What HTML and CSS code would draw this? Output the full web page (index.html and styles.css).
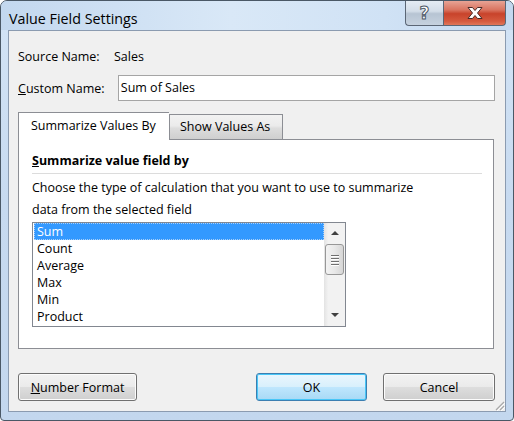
FILE: index.html
```html
<!DOCTYPE html>
<html>
<head>
<meta charset="utf-8">
<link rel="stylesheet" href="styles.css">
</head>
<body>
<div class="window">
  <div class="titlebar">
    <span class="title">Value Field Settings</span>
    <div class="caption-btns">
      <div class="cbtn help"><span class="qmark">?</span></div>
      <div class="cbtn close">
        <svg width="20" height="14" viewBox="0 0 20 14">
          <path d="M3 1.5 H7.5 L10 4.5 L12.5 1.5 H17 L12.5 7 L17 12.5 H12.5 L10 9.5 L7.5 12.5 H3 L7.5 7 Z" fill="#ffffff" stroke="#4a2a26" stroke-width="1" stroke-linejoin="round"/>
        </svg>
      </div>
    </div>
  </div>
  <div class="client">
    <div class="row source">
      <span class="label">Source Name:</span>
      <span class="value">Sales</span>
    </div>
    <div class="row custom">
      <span class="label label-wide"><u>C</u>ustom Name:</span>
      <div class="input">Sum of Sales</div>
    </div>
    <div class="tabs">
      <div class="tab active">Summarize Values By</div>
      <div class="tab">Show Values As</div>
    </div>
    <div class="panel">
      <div class="group-title"><u>S</u>ummarize value field by</div>
      <div class="sep"></div>
      <p class="desc">Choose the type of calculation that you want to use to summarize<br>data from the selected field</p>
      <div class="listbox">
        <ul class="items">
          <li class="sel">Sum</li>
          <li>Count</li>
          <li>Average</li>
          <li>Max</li>
          <li>Min</li>
          <li>Product</li>
        </ul>
        <div class="scrollbar">
          <div class="arrow up"></div>
          <div class="thumb"><span></span><span></span><span></span><span></span></div>
          <div class="track"></div>
          <div class="arrow down"></div>
        </div>
      </div>
    </div>
    <div class="buttons">
      <div class="btn numfmt"><u>N</u>umber Format</div>
      <div class="spacer"></div>
      <div class="btn ok">OK</div>
      <div class="btn cancel">Cancel</div>
    </div>
    <svg class="grip" width="11" height="11" viewBox="0 0 11 11">
      <path d="M10 2 L2 10 M10 6 L6 10" stroke="#a9a9a9" stroke-width="1.2"/>
      <path d="M11 3 L3 11 M11 7 L7 11" stroke="#ffffff" stroke-width="1"/>
    </svg>
  </div>
</div>
</body>
</html>
```
FILE: styles.css
```css
* { box-sizing: border-box; }
html, body { margin: 0; padding: 0; background: #ffffff; }
body {
  font-family: "Open Sans", "Noto Sans", sans-serif;
  font-size: 12.5px;
  color: #000;
}
.window {
  width: 514px;
  height: 421px;
  border: 1px solid #4a5866;
  border-radius: 7px 7px 4px 4px;
  background: linear-gradient(180deg, #bfd5ee 0px, #d2e3f5 30px, #c7daf0 200px, #c3d7ee 421px);
  display: flex;
  flex-direction: column;
  overflow: hidden;
}
.titlebar {
  height: 29px;
  display: flex;
  align-items: flex-start;
  padding-left: 8px;
  background: linear-gradient(90deg, #c3d8ef 0%, #d9e8f7 45%, #d0e2f5 75%, #c4d8ef 100%);
}
.title {
  font-size: 14.3px;
  line-height: 20px;
  margin-top: 8px;
  color: #000;
}
.caption-btns {
  margin-left: auto;
  margin-right: 7px;
  margin-top: -1px;
  display: flex;
}
.cbtn {
  height: 26px;
  display: flex;
  align-items: center;
  justify-content: center;
  border: 1px solid #5b6675;
  border-top: none;
}
.help {
  width: 38px;
  border-radius: 0 0 0 4px;
  border-right: none;
  background: linear-gradient(180deg, #e6edf5 0%, #d3dde8 45%, #b7c4d3 55%, #c6d2df 100%);
}
.qmark {
  font-family: "DejaVu Sans", sans-serif;
  font-weight: bold;
  font-size: 17px;
  line-height: 20px;
  color: #ffffff;
  -webkit-text-stroke: 1px #4d5866;
}
.close {
  width: 63px;
  border-radius: 0 0 4px 0;
  background: linear-gradient(180deg, #e9a99b 0%, #d9735f 40%, #c8432b 55%, #d55a3f 85%, #e0765a 100%);
}
.client {
  margin: 0 7px;
  height: 382px;
  border: 1px solid #8b9bb0;
  background: #f0f0f0;
  position: relative;
  display: flex;
  flex-direction: column;
  padding: 0 10px 0 9px;
}
.row { display: flex; align-items: center; }
.source { margin-top: 17px; height: 16px; }
.label { width: 96px; }
.label-wide { width: 100px; }
.custom { margin-top: 11px; height: 26px; }
.input {
  width: 378px;
  height: 26px;
  background: #fff;
  border: 1px solid #a5a5a5;
  padding-left: 2px;
  line-height: 23px;
}
.tabs {
  margin-top: 11px;
  display: flex;
  align-items: flex-end;
  height: 27px;
  position: relative;
  z-index: 1;
}
.tab {
  border: 1px solid #8c8e94;
  border-bottom: none;
  height: 25px;
  width: 114px;
  padding-left: 10px;
  line-height: 23px;
  background: linear-gradient(180deg, #f2f2f2 0%, #ebebeb 45%, #dddddd 55%, #cfcfcf 100%);
}
.tab.active {
  width: 151px;
  height: 28px;
  margin-bottom: -1px;
  background: #fff;
  border-right: none;
  padding-left: 12px;
  line-height: 26px;
}
.panel {
  width: 476px;
  height: 210px;
  background: #fff;
  border: 1px solid #8c8e94;
  padding: 0 12px 0 13px;
}
.group-title {
  font-weight: bold;
  margin-top: 12px;
  line-height: 17px;
}
.sep {
  height: 1px;
  background: #dcdcdc;
  margin-top: 4px;
  width: 450px;
}
.desc {
  margin: 3px 0 0 0;
  line-height: 22px;
}
.listbox {
  margin-top: 1px;
  width: 314px;
  height: 105px;
  border: 1px solid #828790;
  display: flex;
}
.items {
  list-style: none;
  margin: 0;
  padding: 0;
  flex: 1;
}
.items li {
  height: 17px;
  line-height: 18px;
  padding-left: 3px;
  margin-left: 1px;
}
.items li.sel {
  background: #3399ff;
  color: #fff;
  outline: 1px dotted #a9cff7;
  outline-offset: -1px;
}
.scrollbar {
  width: 21px;
  display: flex;
  flex-direction: column;
  align-items: center;
  background: linear-gradient(90deg, #e3e3e3 0%, #f2f2f2 20%, #f2f2f2 100%);
}
.arrow {
  width: 0;
  height: 0;
  border-left: 4px solid transparent;
  border-right: 4px solid transparent;
}
.arrow.up {
  margin-top: 8px;
  border-bottom: 4px solid #404040;
}
.arrow.down {
  margin-bottom: 9px;
  border-top: 4px solid #404040;
}
.thumb {
  margin-top: 9px;
  width: 19px;
  height: 31px;
  border: 1px solid #979797;
  border-radius: 3px;
  background: linear-gradient(90deg, #f3f3f3 0%, #e8e8e8 50%, #d6d6d6 100%);
  display: flex;
  flex-direction: column;
  align-items: center;
  justify-content: center;
  gap: 2px;
}
.thumb span {
  width: 8px;
  height: 1px;
  background: #707070;
  box-shadow: 0 1px 0 #ffffff;
}
.track { flex: 1; }
.buttons {
  margin-top: 24px;
  display: flex;
}
.spacer { flex: 1; }
.btn {
  height: 28px;
  border: 1px solid #707070;
  border-radius: 3px;
  background: linear-gradient(180deg, #f2f2f2 0%, #ebebeb 48%, #dddddd 52%, #cfcfcf 100%);
  display: flex;
  align-items: center;
  justify-content: center;
  box-shadow: inset 0 0 0 1px #fcfcfc;
}
.numfmt { width: 119px; }
.ok {
  width: 111px;
  border-color: #3c7fb1;
  background: linear-gradient(180deg, #eaf6fd 0%, #d9f0fc 48%, #bee6fd 52%, #a7d9f5 100%);
  box-shadow: inset 0 0 0 1px #48c6f7;
  margin-right: 16px;
}
.cancel { width: 112px; }
.grip {
  position: absolute;
  right: 0;
  bottom: 0;
}
```
